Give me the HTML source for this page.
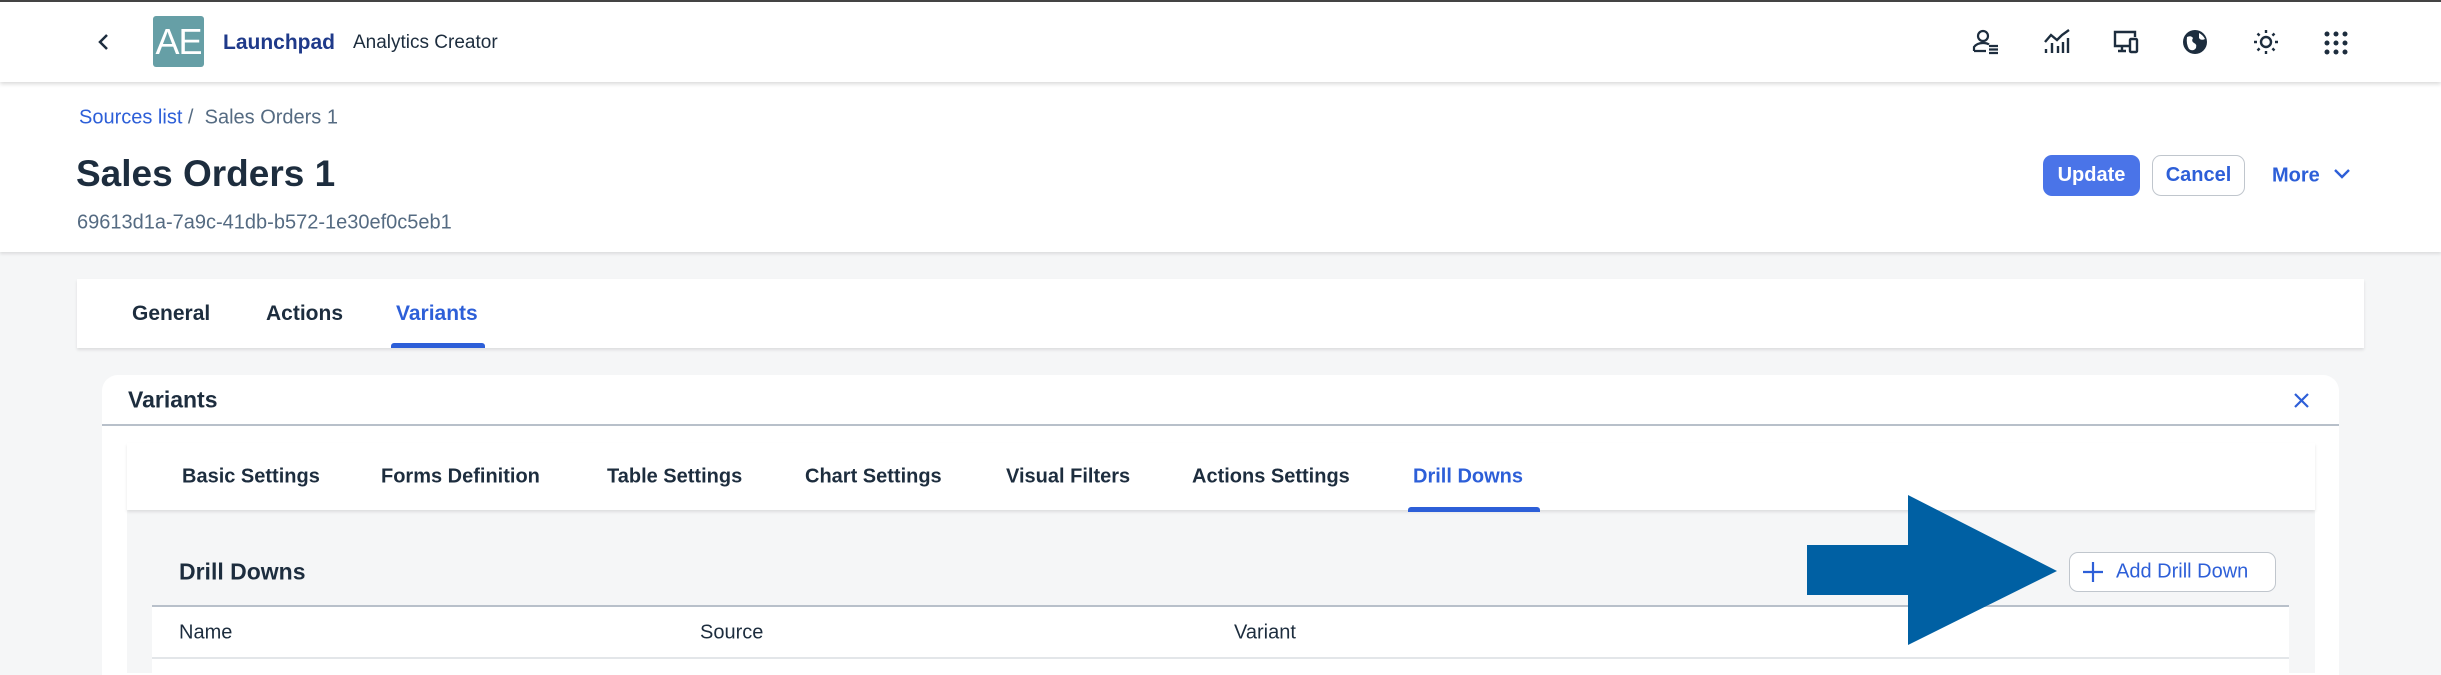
<!DOCTYPE html>
<html><head><meta charset="utf-8"><style>
*{margin:0;padding:0;box-sizing:border-box}
body{width:2441px;height:668px;overflow:hidden;background:#f5f6f7;font-family:"Liberation Sans",sans-serif;color:#1d2d3e;position:relative}
.a{position:absolute;white-space:nowrap}
.c{transform:translateY(-50%)}
.b{font-weight:bold}
</style></head><body>
<div class="a" style="left:0;top:0;width:2441px;height:82px;background:#fff;border-top:2px solid #444;box-shadow:0 2px 4px rgba(0,0,0,.15);z-index:2"></div>
<div class="a" style="left:0;top:82px;width:2441px;height:170px;background:#fff;box-shadow:0 2px 3px rgba(0,0,0,.1)"></div>
<div style="position:absolute;inset:0;z-index:3">
<svg class="a" style="left:96px;top:32px" width="16" height="20" viewBox="0 0 16 20"><path d="M11 3 L4 10 L11 17" fill="none" stroke="#1d2d3e" stroke-width="2.5"/></svg>
<div class="a" style="left:153px;top:16px;width:51px;height:51px;background:#669fa6;border-radius:3px;color:#fff;font-size:36px;line-height:51px;text-align:center;letter-spacing:-1px">AE</div>
<div class="a c b" style="left:223px;top:43px;font-size:21px;color:#1f3a8a">Launchpad</div>
<div class="a c" style="left:353px;top:43px;font-size:19px;color:#1d2d3e">Analytics Creator</div>
<svg class="a" style="left:1972px;top:29px" width="28" height="26" viewBox="0 0 28 26" fill="none" stroke="#1d2d3e" stroke-width="2.2"><circle cx="11" cy="7" r="5"/><path d="M2 22 V18 Q5 14 11 14 Q15 14 17 15.5 M2 22 H14"/><path d="M17 17 H26 M17 20.5 H26 M17 24 H26"/></svg>
<svg class="a" style="left:2043px;top:29px" width="28" height="26" viewBox="0 0 28 26" fill="none" stroke="#1d2d3e" stroke-width="2.4"><path d="M2 13 L8 6 L14 11 L19 6 L26 1"/><path d="M3 20 V24 M9 14 V24 M15 17 V24 M20 13 V24 M25 9 V24"/></svg>
<svg class="a" style="left:2112px;top:29px" width="28" height="26" viewBox="0 0 28 26" fill="none" stroke="#1d2d3e" stroke-width="2.4"><path d="M17 17 H3 V3 H23 V8"/><path d="M10 17 V22 M6 22 H14"/><rect x="18" y="10" width="7" height="13" rx="1"/></svg>
<svg class="a" style="left:2182px;top:29px" width="28" height="28" viewBox="0 0 28 28"><circle cx="13" cy="13" r="12" fill="#1d2d3e"/><path d="M5 8 Q9 6 11 9 Q9 12 12 14 Q15 15 14 19 Q11 23 7 20 Q4 15 5 8Z M17 4 Q21 6 23 10 Q19 12 17 9Z" fill="#fff"/></svg>
<svg class="a" style="left:2253px;top:29px" width="28" height="28" viewBox="0 0 28 28" fill="none" stroke="#1d2d3e" stroke-width="2.4"><circle cx="13" cy="13" r="5"/><path d="M13 1 V4 M13 22 V25 M1 13 H4 M22 13 H25 M4.5 4.5 L6.6 6.6 M19.4 19.4 L21.5 21.5 M4.5 21.5 L6.6 19.4 M19.4 6.6 L21.5 4.5"/></svg>
<svg class="a" style="left:2324px;top:31px" width="24" height="24" viewBox="0 0 24 24" fill="#1d2d3e"><circle cx="3" cy="3" r="2.5"/><circle cx="12" cy="3" r="2.5"/><circle cx="21" cy="3" r="2.5"/><circle cx="3" cy="12" r="2.5"/><circle cx="12" cy="12" r="2.5"/><circle cx="21" cy="12" r="2.5"/><circle cx="3" cy="21" r="2.5"/><circle cx="12" cy="21" r="2.5"/><circle cx="21" cy="21" r="2.5"/></svg>

<div class="a c" style="left:79px;top:118px;font-size:20px;color:#556b82"><span style="color:#2d5fd8">Sources list</span> /&nbsp; Sales Orders 1</div>
<div class="a c b" style="left:76px;top:174px;font-size:37px;color:#1d2d3e">Sales Orders 1</div>
<div class="a c" style="left:77px;top:223px;font-size:20px;color:#556b82">69613d1a-7a9c-41db-b572-1e30ef0c5eb1</div>
<div class="a b" style="left:2043px;top:155px;width:97px;height:41px;background:#4a74e8;border-radius:9px;color:#fff;font-size:20px;line-height:41px;text-align:center">Update</div>
<div class="a b" style="left:2152px;top:155px;width:93px;height:41px;background:#fff;border:1.5px solid #c0c6cd;border-radius:9px;color:#2d5fd8;font-size:20px;line-height:38px;text-align:center">Cancel</div>
<div class="a c b" style="left:2272px;top:176px;font-size:20px;color:#2d5fd8">More</div>
<svg class="a" style="left:2333px;top:168px" width="18" height="12" viewBox="0 0 18 12"><path d="M2 2 L9 9 L16 2" fill="none" stroke="#2d5fd8" stroke-width="2.4"/></svg>

<div class="a" style="left:77px;top:279px;width:2287px;height:69px;background:#fff;box-shadow:0 2px 3px rgba(0,0,0,.1)"></div>
<div class="a c b" style="left:132px;top:314px;font-size:21px">General</div>
<div class="a c b" style="left:266px;top:314px;font-size:21px">Actions</div>
<div class="a c b" style="left:396px;top:314px;font-size:21px;color:#2d5fd8">Variants</div>
<div class="a" style="left:391px;top:343px;width:94px;height:5px;background:#2d5fd8;border-radius:3px 3px 0 0"></div>

<div class="a" style="left:102px;top:375px;width:2237px;height:300px;background:#fff;border-radius:16px 16px 0 0"></div>
<div class="a c b" style="left:128px;top:400px;font-size:23px">Variants</div>
<svg class="a" style="left:2293px;top:392px" width="17" height="17" viewBox="0 0 17 17"><path d="M2 2 L15 15 M15 2 L2 15" stroke="#2d5fd8" stroke-width="2.2"/></svg>
<div class="a" style="left:102px;top:424px;width:2237px;height:2px;background:#b8c0ca"></div>

<div class="a" style="left:127px;top:443px;width:2188px;height:230px;background:#f5f6f7"></div>
<div class="a" style="left:127px;top:443px;width:2188px;height:67px;background:#fff;box-shadow:0 2px 3px rgba(0,0,0,.1)"></div>
<div class="a c b" style="left:182px;top:477px;font-size:20px">Basic Settings</div>
<div class="a c b" style="left:381px;top:477px;font-size:20px">Forms Definition</div>
<div class="a c b" style="left:607px;top:477px;font-size:20px">Table Settings</div>
<div class="a c b" style="left:805px;top:477px;font-size:20px">Chart Settings</div>
<div class="a c b" style="left:1006px;top:477px;font-size:20px">Visual Filters</div>
<div class="a c b" style="left:1192px;top:477px;font-size:20px">Actions Settings</div>
<div class="a c b" style="left:1413px;top:477px;font-size:20px;color:#2d5fd8">Drill Downs</div>
<div class="a" style="left:1408px;top:507px;width:132px;height:5px;background:#2d5fd8;border-radius:3px 3px 0 0"></div>

<div class="a c b" style="left:179px;top:572px;font-size:23px">Drill Downs</div>
<div class="a" style="left:2069px;top:552px;width:207px;height:40px;background:#fff;border:1.5px solid #c0c6cd;border-radius:9px"></div>
<svg class="a" style="left:2082px;top:561px" width="22" height="22" viewBox="0 0 22 22"><path d="M11 1 V21 M1 11 H21" stroke="#2d5fd8" stroke-width="2.2"/></svg>
<div class="a c" style="left:2116px;top:572px;font-size:20px;color:#2d5fd8">Add Drill Down</div>

<div class="a" style="left:152px;top:605px;width:2137px;height:70px;background:#fff;border-top:2px solid #b8c0ca"></div>
<div class="a" style="left:152px;top:657px;width:2137px;height:2px;background:#e3e6e9"></div>
<div class="a c" style="left:179px;top:633px;font-size:20px">Name</div>
<div class="a c" style="left:700px;top:633px;font-size:20px">Source</div>
<div class="a c" style="left:1234px;top:633px;font-size:20px">Variant</div>

<svg class="a" style="left:1807px;top:495px" width="252" height="152" viewBox="0 0 252 152"><path d="M0 50 H101 V0 L250 76 L101 150 V100 H0Z" fill="#0060a3"/></svg>
</div>
</body></html>
